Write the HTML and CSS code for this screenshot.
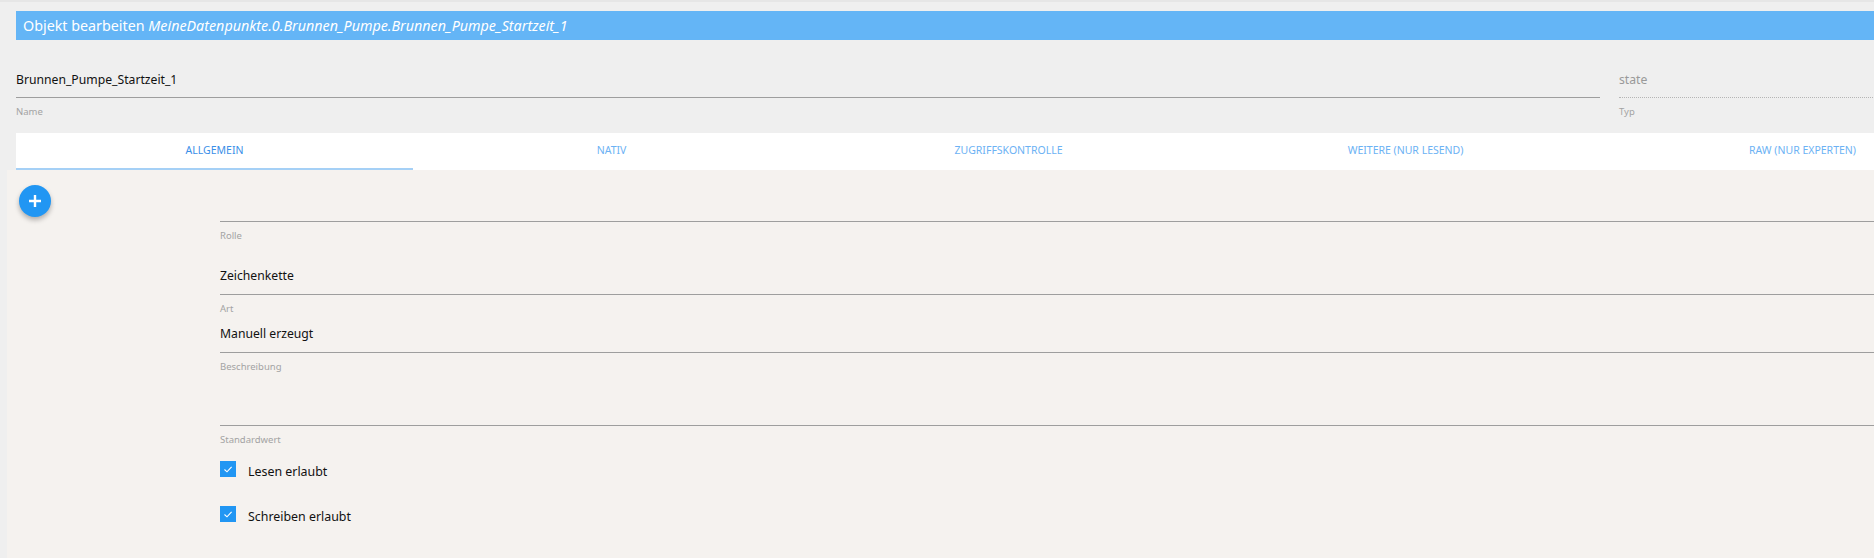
FILE: index.html
```html
<!DOCTYPE html>
<html>
<head>
<meta charset="utf-8">
<title>Objekt bearbeiten</title>
<link rel="stylesheet" href="styles.css">
</head>
<body>
<div class="dialog">
	<div class="dialog-inner">
		<div class="dialog-title">Objekt bearbeiten <i>MeineDatenpunkte.0.Brunnen_Pumpe.Brunnen_Pumpe_Startzeit_1</i></div>

		<div class="head-row">
			<div class="field">
				<div class="field-input">Brunnen_Pumpe_Startzeit_1</div>
				<div class="field-label">Name</div>
			</div>
			<div class="field">
				<div class="field-input disabled">state</div>
				<div class="field-label">Typ</div>
			</div>
		</div>

		<div class="tabs">
			<div class="tab active">Allgemein</div>
			<div class="tab">Nativ</div>
			<div class="tab">Zugriffskontrolle</div>
			<div class="tab">Weitere (nur lesend)</div>
			<div class="tab">Raw (nur Experten)</div>
		</div>

		<div class="tab-panel">
			<div class="panel-side">
				<button class="fab" type="button">
					<svg width="14" height="14" viewBox="0 0 14 14"><path d="M7 1v12M1 7h12" stroke="#fff" stroke-width="2.4" fill="none"/></svg>
				</button>
			</div>
			<div class="panel-form">
				<div class="field">
					<div class="field-input h52"></div>
					<div class="field-label">Rolle</div>
				</div>
				<div class="field">
					<div class="field-input h52">Zeichenkette</div>
					<div class="field-label">Art</div>
				</div>
				<div class="field">
					<div class="field-input h37">Manuell erzeugt</div>
					<div class="field-label">Beschreibung</div>
				</div>
				<div class="field">
					<div class="field-input h52"></div>
					<div class="field-label">Standardwert</div>
				</div>

				<div class="check-row first">
					<span class="check-box"><svg width="16" height="16" viewBox="0 0 16 16"><path d="M4.5 8.5l2.5 2.3 4.6-5" stroke="#fff" stroke-width="1.1" fill="none"/></svg></span>
					<span class="check-text">Lesen erlaubt</span>
				</div>
				<div class="check-row">
					<span class="check-box"><svg width="16" height="16" viewBox="0 0 16 16"><path d="M4.5 8.5l2.5 2.3 4.6-5" stroke="#fff" stroke-width="1.1" fill="none"/></svg></span>
					<span class="check-text">Schreiben erlaubt</span>
				</div>
			</div>
		</div>
	</div>
</div>
</body>
</html>
```

FILE: styles.css
```css
body {
	margin: 0;
	height: 556px;
	overflow: hidden;
	background: #efefef;
	border-top: 2px solid #e6e6e6;
	font-family: "Noto Sans", "Open Sans", sans-serif;
}
.dialog {
	overflow: hidden;
	padding: 9px 0 0 7px;
}
.dialog-inner {
	width: 1985px;
	padding-left: 9px;
}
.dialog-title {
	height: 29px;
	line-height: 29px;
	padding-left: 7px;
	background: #64b5f6;
	color: #fff;
	font-size: 14.3px;
}
.dialog-title i {
	font-style: italic;
}

/* name / typ */
.head-row {
	display: grid;
	grid-template-columns: 1584px 1fr;
	column-gap: 19px;
	margin-top: 30px;
}
.field-input {
	display: flex;
	align-items: flex-end;
	box-sizing: border-box;
	height: 28px;
	padding-bottom: 7px;
	line-height: 20px;
	border-bottom: 1px solid #9e9e9e;
	font-size: 12.2px;
	color: #111;
}
.field-input.disabled {
	color: #999;
	border-bottom: 1px dotted #b5b5b5;
}
.field-label {
	margin-top: 7px;
	line-height: 14px;
	font-size: 9.5px;
	color: #a3a3a3;
}

/* tabs */
.tabs {
	display: grid;
	grid-template-columns: repeat(5, 1fr);
	margin-top: 14px;
	background: #fff;
}
.tab {
	line-height: 35px;
	text-align: center;
	text-transform: uppercase;
	font-size: 10.5px;
	color: #6cb2f4;
	border-bottom: 2px solid transparent;
}
.tab.active {
	color: #3a8fe8;
	border-bottom-color: #a5d0f6;
}

/* panel */
.tab-panel {
	display: flex;
	height: 388px;
	margin-left: -9px;
	background: #f5f2ef;
}
.panel-side {
	flex: none;
	width: 213px;
}
.fab {
	display: flex;
	align-items: center;
	justify-content: center;
	width: 32px;
	height: 32px;
	margin: 15px 0 0 12px;
	padding: 0;
	border: 0;
	border-radius: 50%;
	background: #2196f3;
	box-shadow: 0 3px 5px rgba(0, 0, 0, 0.28);
}
.panel-form {
	flex: 1;
}
.panel-form .field-input {
	padding-bottom: 8px;
}
.field-input.h52 {
	height: 52px;
}
.field-input.h37 {
	height: 37px;
}

.check-row {
	display: flex;
	align-items: flex-start;
	gap: 12px;
	height: 20px;
	margin-top: 25px;
	font-size: 12.4px;
	line-height: 20px;
	color: #111;
}
.check-row.first {
	margin-top: 13px;
}
.check-box {
	width: 16px;
	height: 16px;
	margin-top: 1px;
	background: #2196f3;
}
.check-box svg {
	display: block;
}
.check-text {
	padding-top: 2px;
}
```
